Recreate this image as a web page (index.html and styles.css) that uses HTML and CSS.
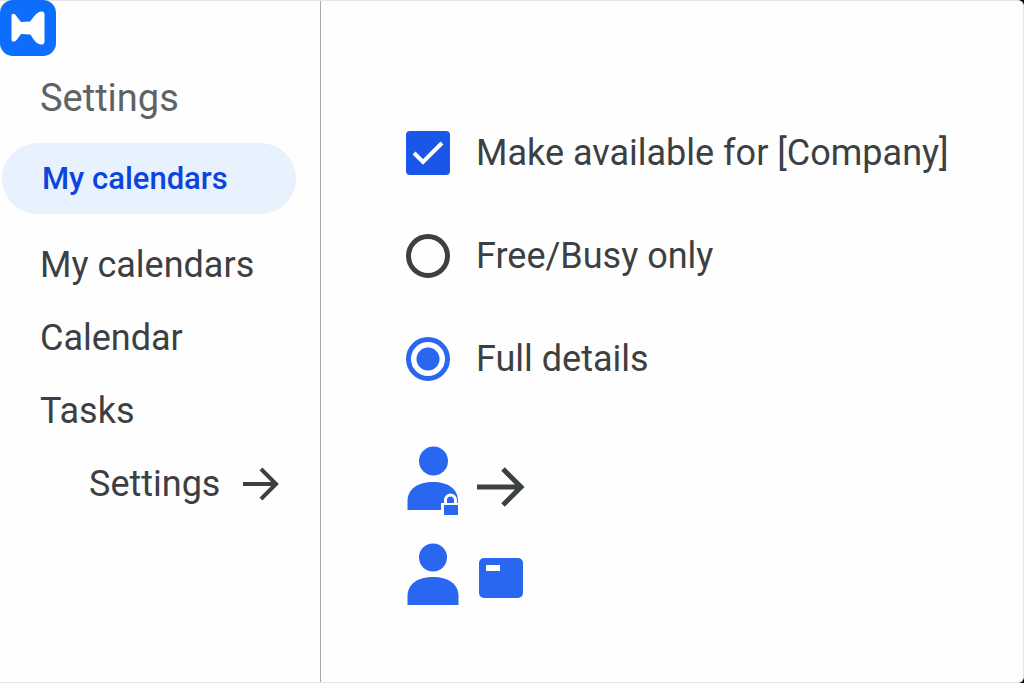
FILE: index.html
```
<!DOCTYPE html>
<html lang="en">
<head>
  <meta charset="UTF-8">
  <title>Calendar Settings</title>
  <meta name="viewport" content="width=device-width, initial-scale=1.0">
  <link rel="stylesheet" href="styles.css">
</head>
<body>

<div class="page">

  <aside class="sidebar">
    <svg class="logo" viewBox="0 0 56 56" aria-hidden="true">
      <rect width="56" height="56" rx="13" fill="#0d6efd"/>
      <path d="M11.5 16C11.5 13.5 14 13 15.5 15L21 22L30 21.5L34 16.5C36 13.5 39 11.5 42 11.5C44 11.5 44.5 13 44.5 15V41C44.5 44 43 45 40.5 44.5C37.5 44 35 41.5 33 38.5L30.5 34.5L21 34L17 39.5C14.5 42.5 11.5 42.5 11.5 39Z" fill="#fff"/>
    </svg>

    <h1>Settings</h1>

    <nav>
      <a class="active" href="#my-calendars">My calendars</a>
      <a href="#calendars">My calendars</a>
      <a href="#calendar">Calendar</a>
      <a href="#tasks">Tasks</a>
      <a class="sub" href="#settings">Settings
        <svg class="nav-arrow" viewBox="0 0 36 34" aria-hidden="true">
          <path d="M0 17H33M18 2L33 17L18 32" fill="none" stroke="#3c4043" stroke-width="4"/>
        </svg>
      </a>
    </nav>
  </aside>

  <main>
    <form class="options">
      <label><input type="checkbox" checked> Make available for [Company]</label>
      <label><input type="radio" name="access"> Free/Busy only</label>
      <label><input type="radio" name="access" checked> Full details</label>
    </form>

    <div class="icons">
      <svg class="person" viewBox="0 0 54 70" aria-hidden="true">
        <circle cx="27.5" cy="15" r="14.5" fill="#2a67f0"/>
        <path d="M1.500 64V55C1.500 43 12 36 27 36C42 36 52 43 52 55V64Z" fill="#2a67f0"/>
        <!-- lock -->
        <path d="M35 70V57H54V70Z" fill="#fefefe"/>
        <path d="M39.500 58V54A5 5 0 0 1 49.500 54V58" fill="none" stroke="#fefefe" stroke-width="3"/>
        <rect x="38" y="59" width="14" height="10" fill="#2a67f0"/>
      </svg>
      <svg class="arrow" viewBox="0 0 48 40" aria-hidden="true">
        <path d="M0 20H44M26 2L44 20L26 38" fill="none" stroke="#3c4043" stroke-width="5"/>
      </svg>
    </div>

    <div class="icons">
      <svg class="person" viewBox="0 0 54 64" aria-hidden="true">
        <circle cx="27" cy="14.5" r="14" fill="#2a67f0"/>
        <path d="M1.500 62V53C1.500 41 12 34 27 34C42 34 52.500 41 52.500 53V62Z" fill="#2a67f0"/>
      </svg>
      <svg class="card" viewBox="0 0 44 40" aria-hidden="true">
        <rect width="44" height="40" rx="5" fill="#2a67f0"/>
        <rect x="7" y="7" width="14" height="6" fill="#fff"/>
      </svg>
    </div>
  </main>

</div>

</body>
</html>
```
FILE: styles.css
```
* {
  box-sizing: border-box;
}
html {
  background: #000;
}
body {
  font-family: Roboto, sans-serif;
  margin: 0;
  color: #3c4043;
  font-size: 36px;
  line-height: 44px;
}
.page {
  display: flex;
  min-height: 100vh;
  background: #fefefe;
  border: 1px solid #e4e6e6;
  border-left: none;
  border-radius: 0 6px 6px 0;
}
.sidebar {
  width: 321px;
  flex-shrink: 0;
  border-right: 1px solid #aaa;
}
.logo {
  display: block;
  width: 56px;
  height: 56px;
  margin-top: -1px;
}
h1 {
  margin: 20px 0 23px 40px;
  font-size: 38px;
  font-weight: 400;
  color: #606264;
}
nav {
  display: flex;
  flex-direction: column;
  padding-right: 24px;
}
nav a {
  display: flex;
  align-items: center;
  height: 73px;
  padding-left: 40px;
  color: #3c4043;
  text-decoration: none;
}
nav a.active {
  height: 71px;
  margin: 0 0 14px 2px;
  background: #e8f1fe;
  border-radius: 36px;
  color: #0b45dc;
  font-size: 31px;
  font-weight: 500;
}
nav a.sub {
  gap: 23px;
  padding-left: 89px;
}
.nav-arrow {
  width: 36px;
  height: 34px;
}
main {
  flex: 1;
  padding: 130px 24px 24px 85px;
}
.options {
  display: flex;
  flex-direction: column;
  gap: 59px;
}
label {
  display: flex;
  align-items: center;
  gap: 26px;
}
input {
  appearance: none;
  flex-shrink: 0;
  width: 44px;
  height: 44px;
  margin: 0;
}
input[type="checkbox"] {
  border-radius: 4px;
  background: #1a56e8;
}
input[type="checkbox"]:checked {
  background-image: url("data:image/svg+xml,%3Csvg xmlns='http://www.w3.org/2000/svg' viewBox='0 0 44 44'%3E%3Cpath d='M8 22L17 31L36 12' fill='none' stroke='white' stroke-width='4'/%3E%3C/svg%3E");
}
input[type="radio"] {
  border: 5px solid #3c4043;
  border-radius: 50%;
}
input[type="radio"]:checked {
  border-color: #2a67f0;
  background: radial-gradient(circle, #2a67f0 11px, transparent 12px);
}
.icons {
  display: flex;
  align-items: center;
  gap: 17px;
  margin-top: 27px;
}
.options + .icons {
  margin-top: 65px;
}
.person {
  width: 54px;
}
.arrow {
  width: 48px;
  margin-top: 12px;
}
.card {
  width: 44px;
  margin: 5px 0 0 2px;
}
```
